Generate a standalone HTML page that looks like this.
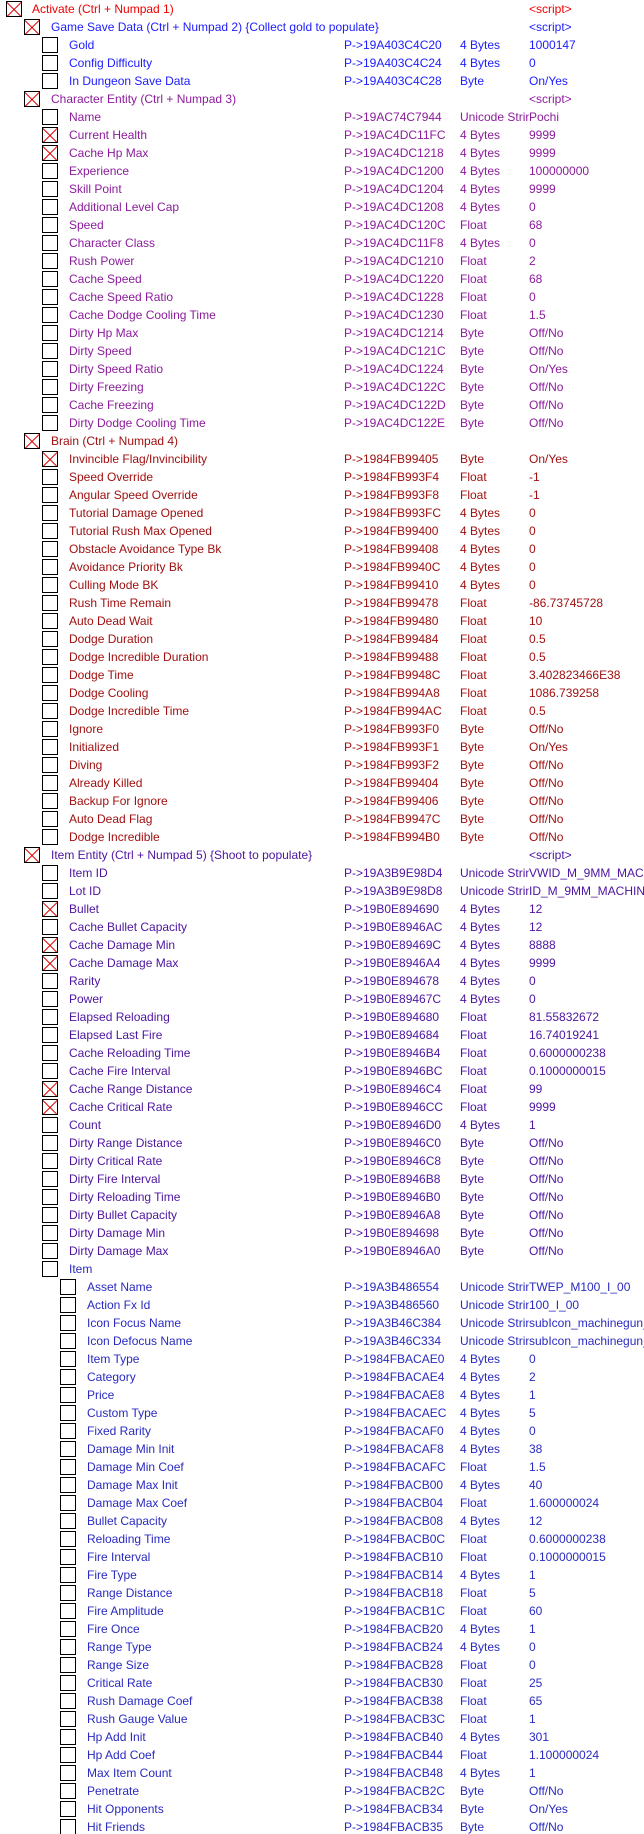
<!DOCTYPE html>
<html><head><meta charset="utf-8">
<style>
html,body{margin:0;padding:0;background:#fff;width:644px;height:1834px;overflow:hidden}
body{font-family:"Liberation Sans",Arial,sans-serif;font-size:12px}
.r{position:relative;height:18px;line-height:18px;white-space:nowrap}
.r i{position:absolute;top:1px;width:14px;height:14px;border:1px solid #000;background:#fff;overflow:hidden}
.r i.x::before,.r i.x::after{content:"";position:absolute;left:-3px;top:6.5px;width:20px;height:1px;background:#e00000;transform:rotate(45deg)}
.r i.x::after{transform:rotate(-45deg)}
.r b,.r s,.r u,.r em{position:absolute;top:0;font-weight:normal;font-style:normal;text-decoration:none}
.r s{left:344px}
.r u{left:460px;width:69px;overflow:hidden}
.r em{left:529px;width:115px;overflow:hidden}
.l0 i{left:6px}.l0 b{left:32px}
.l1 i{left:24px}.l1 b{left:51px}
.l2 i{left:42px}.l2 b{left:69px}
.l3 i{left:60px}.l3 b{left:87px}
.ca{color:#f00000}
.cg{color:#1c1cff}
.cc{color:#8c1c9c}
.cb{color:#a01010}
.ci{color:#4c14a0}
.cj{color:#2a2ac0}
</style></head><body>
<div class="r l0 ca"><i class="x"></i><b>Activate (Ctrl + Numpad 1)</b><em>&lt;script&gt;</em></div>
<div class="r l1 cg"><i class="x"></i><b>Game Save Data (Ctrl + Numpad 2) {Collect gold to populate}</b><em>&lt;script&gt;</em></div>
<div class="r l2 cg"><i></i><b>Gold</b><s>P-&gt;19A403C4C20</s><u>4 Bytes</u><em>1000147</em></div>
<div class="r l2 cg"><i></i><b>Config Difficulty</b><s>P-&gt;19A403C4C24</s><u>4 Bytes</u><em>0</em></div>
<div class="r l2 cg"><i></i><b>In Dungeon Save Data</b><s>P-&gt;19A403C4C28</s><u>Byte</u><em>On/Yes</em></div>
<div class="r l1 cc"><i class="x"></i><b>Character Entity (Ctrl + Numpad 3)</b><em>&lt;script&gt;</em></div>
<div class="r l2 cc"><i></i><b>Name</b><s>P-&gt;19AC74C7944</s><u>Unicode String</u><em>Pochi</em></div>
<div class="r l2 cc"><i class="x"></i><b>Current Health</b><s>P-&gt;19AC4DC11FC</s><u>4 Bytes</u><em>9999</em></div>
<div class="r l2 cc"><i class="x"></i><b>Cache Hp Max</b><s>P-&gt;19AC4DC1218</s><u>4 Bytes</u><em>9999</em></div>
<div class="r l2 cc"><i></i><b>Experience</b><s>P-&gt;19AC4DC1200</s><u>4 Bytes</u><em>100000000</em></div>
<div class="r l2 cc"><i></i><b>Skill Point</b><s>P-&gt;19AC4DC1204</s><u>4 Bytes</u><em>9999</em></div>
<div class="r l2 cc"><i></i><b>Additional Level Cap</b><s>P-&gt;19AC4DC1208</s><u>4 Bytes</u><em>0</em></div>
<div class="r l2 cc"><i></i><b>Speed</b><s>P-&gt;19AC4DC120C</s><u>Float</u><em>68</em></div>
<div class="r l2 cc"><i></i><b>Character Class</b><s>P-&gt;19AC4DC11F8</s><u>4 Bytes</u><em>0</em></div>
<div class="r l2 cc"><i></i><b>Rush Power</b><s>P-&gt;19AC4DC1210</s><u>Float</u><em>2</em></div>
<div class="r l2 cc"><i></i><b>Cache Speed</b><s>P-&gt;19AC4DC1220</s><u>Float</u><em>68</em></div>
<div class="r l2 cc"><i></i><b>Cache Speed Ratio</b><s>P-&gt;19AC4DC1228</s><u>Float</u><em>0</em></div>
<div class="r l2 cc"><i></i><b>Cache Dodge Cooling Time</b><s>P-&gt;19AC4DC1230</s><u>Float</u><em>1.5</em></div>
<div class="r l2 cc"><i></i><b>Dirty Hp Max</b><s>P-&gt;19AC4DC1214</s><u>Byte</u><em>Off/No</em></div>
<div class="r l2 cc"><i></i><b>Dirty Speed</b><s>P-&gt;19AC4DC121C</s><u>Byte</u><em>Off/No</em></div>
<div class="r l2 cc"><i></i><b>Dirty Speed Ratio</b><s>P-&gt;19AC4DC1224</s><u>Byte</u><em>On/Yes</em></div>
<div class="r l2 cc"><i></i><b>Dirty Freezing</b><s>P-&gt;19AC4DC122C</s><u>Byte</u><em>Off/No</em></div>
<div class="r l2 cc"><i></i><b>Cache Freezing</b><s>P-&gt;19AC4DC122D</s><u>Byte</u><em>Off/No</em></div>
<div class="r l2 cc"><i></i><b>Dirty Dodge Cooling Time</b><s>P-&gt;19AC4DC122E</s><u>Byte</u><em>Off/No</em></div>
<div class="r l1 cb"><i class="x"></i><b>Brain (Ctrl + Numpad 4)</b></div>
<div class="r l2 cb"><i class="x"></i><b>Invincible Flag/Invincibility</b><s>P-&gt;1984FB99405</s><u>Byte</u><em>On/Yes</em></div>
<div class="r l2 cb"><i></i><b>Speed Override</b><s>P-&gt;1984FB993F4</s><u>Float</u><em>-1</em></div>
<div class="r l2 cb"><i></i><b>Angular Speed Override</b><s>P-&gt;1984FB993F8</s><u>Float</u><em>-1</em></div>
<div class="r l2 cb"><i></i><b>Tutorial Damage Opened</b><s>P-&gt;1984FB993FC</s><u>4 Bytes</u><em>0</em></div>
<div class="r l2 cb"><i></i><b>Tutorial Rush Max Opened</b><s>P-&gt;1984FB99400</s><u>4 Bytes</u><em>0</em></div>
<div class="r l2 cb"><i></i><b>Obstacle Avoidance Type Bk</b><s>P-&gt;1984FB99408</s><u>4 Bytes</u><em>0</em></div>
<div class="r l2 cb"><i></i><b>Avoidance Priority Bk</b><s>P-&gt;1984FB9940C</s><u>4 Bytes</u><em>0</em></div>
<div class="r l2 cb"><i></i><b>Culling Mode BK</b><s>P-&gt;1984FB99410</s><u>4 Bytes</u><em>0</em></div>
<div class="r l2 cb"><i></i><b>Rush Time Remain</b><s>P-&gt;1984FB99478</s><u>Float</u><em>-86.73745728</em></div>
<div class="r l2 cb"><i></i><b>Auto Dead Wait</b><s>P-&gt;1984FB99480</s><u>Float</u><em>10</em></div>
<div class="r l2 cb"><i></i><b>Dodge Duration</b><s>P-&gt;1984FB99484</s><u>Float</u><em>0.5</em></div>
<div class="r l2 cb"><i></i><b>Dodge Incredible Duration</b><s>P-&gt;1984FB99488</s><u>Float</u><em>0.5</em></div>
<div class="r l2 cb"><i></i><b>Dodge Time</b><s>P-&gt;1984FB9948C</s><u>Float</u><em>3.402823466E38</em></div>
<div class="r l2 cb"><i></i><b>Dodge Cooling</b><s>P-&gt;1984FB994A8</s><u>Float</u><em>1086.739258</em></div>
<div class="r l2 cb"><i></i><b>Dodge Incredible Time</b><s>P-&gt;1984FB994AC</s><u>Float</u><em>0.5</em></div>
<div class="r l2 cb"><i></i><b>Ignore</b><s>P-&gt;1984FB993F0</s><u>Byte</u><em>Off/No</em></div>
<div class="r l2 cb"><i></i><b>Initialized</b><s>P-&gt;1984FB993F1</s><u>Byte</u><em>On/Yes</em></div>
<div class="r l2 cb"><i></i><b>Diving</b><s>P-&gt;1984FB993F2</s><u>Byte</u><em>Off/No</em></div>
<div class="r l2 cb"><i></i><b>Already Killed</b><s>P-&gt;1984FB99404</s><u>Byte</u><em>Off/No</em></div>
<div class="r l2 cb"><i></i><b>Backup For Ignore</b><s>P-&gt;1984FB99406</s><u>Byte</u><em>Off/No</em></div>
<div class="r l2 cb"><i></i><b>Auto Dead Flag</b><s>P-&gt;1984FB9947C</s><u>Byte</u><em>Off/No</em></div>
<div class="r l2 cb"><i></i><b>Dodge Incredible</b><s>P-&gt;1984FB994B0</s><u>Byte</u><em>Off/No</em></div>
<div class="r l1 ci"><i class="x"></i><b>Item Entity (Ctrl + Numpad 5) {Shoot to populate}</b><em>&lt;script&gt;</em></div>
<div class="r l2 ci"><i></i><b>Item ID</b><s>P-&gt;19A3B9E98D4</s><u>Unicode String</u><em>VWID_M_9MM_MACHINEGUN</em></div>
<div class="r l2 ci"><i></i><b>Lot ID</b><s>P-&gt;19A3B9E98D8</s><u>Unicode String</u><em>ID_M_9MM_MACHINEGUN</em></div>
<div class="r l2 ci"><i class="x"></i><b>Bullet</b><s>P-&gt;19B0E894690</s><u>4 Bytes</u><em>12</em></div>
<div class="r l2 ci"><i></i><b>Cache Bullet Capacity</b><s>P-&gt;19B0E8946AC</s><u>4 Bytes</u><em>12</em></div>
<div class="r l2 ci"><i class="x"></i><b>Cache Damage Min</b><s>P-&gt;19B0E89469C</s><u>4 Bytes</u><em>8888</em></div>
<div class="r l2 ci"><i class="x"></i><b>Cache Damage Max</b><s>P-&gt;19B0E8946A4</s><u>4 Bytes</u><em>9999</em></div>
<div class="r l2 ci"><i></i><b>Rarity</b><s>P-&gt;19B0E894678</s><u>4 Bytes</u><em>0</em></div>
<div class="r l2 ci"><i></i><b>Power</b><s>P-&gt;19B0E89467C</s><u>4 Bytes</u><em>0</em></div>
<div class="r l2 ci"><i></i><b>Elapsed Reloading</b><s>P-&gt;19B0E894680</s><u>Float</u><em>81.55832672</em></div>
<div class="r l2 ci"><i></i><b>Elapsed Last Fire</b><s>P-&gt;19B0E894684</s><u>Float</u><em>16.74019241</em></div>
<div class="r l2 ci"><i></i><b>Cache Reloading Time</b><s>P-&gt;19B0E8946B4</s><u>Float</u><em>0.6000000238</em></div>
<div class="r l2 ci"><i></i><b>Cache Fire Interval</b><s>P-&gt;19B0E8946BC</s><u>Float</u><em>0.1000000015</em></div>
<div class="r l2 ci"><i class="x"></i><b>Cache Range Distance</b><s>P-&gt;19B0E8946C4</s><u>Float</u><em>99</em></div>
<div class="r l2 ci"><i class="x"></i><b>Cache Critical Rate</b><s>P-&gt;19B0E8946CC</s><u>Float</u><em>9999</em></div>
<div class="r l2 ci"><i></i><b>Count</b><s>P-&gt;19B0E8946D0</s><u>4 Bytes</u><em>1</em></div>
<div class="r l2 ci"><i></i><b>Dirty Range Distance</b><s>P-&gt;19B0E8946C0</s><u>Byte</u><em>Off/No</em></div>
<div class="r l2 ci"><i></i><b>Dirty Critical Rate</b><s>P-&gt;19B0E8946C8</s><u>Byte</u><em>Off/No</em></div>
<div class="r l2 ci"><i></i><b>Dirty Fire Interval</b><s>P-&gt;19B0E8946B8</s><u>Byte</u><em>Off/No</em></div>
<div class="r l2 ci"><i></i><b>Dirty Reloading Time</b><s>P-&gt;19B0E8946B0</s><u>Byte</u><em>Off/No</em></div>
<div class="r l2 ci"><i></i><b>Dirty Bullet Capacity</b><s>P-&gt;19B0E8946A8</s><u>Byte</u><em>Off/No</em></div>
<div class="r l2 ci"><i></i><b>Dirty Damage Min</b><s>P-&gt;19B0E894698</s><u>Byte</u><em>Off/No</em></div>
<div class="r l2 ci"><i></i><b>Dirty Damage Max</b><s>P-&gt;19B0E8946A0</s><u>Byte</u><em>Off/No</em></div>
<div class="r l2 cj"><i></i><b>Item</b></div>
<div class="r l3 cj"><i></i><b>Asset Name</b><s>P-&gt;19A3B486554</s><u>Unicode String</u><em>TWEP_M100_I_00</em></div>
<div class="r l3 cj"><i></i><b>Action Fx Id</b><s>P-&gt;19A3B486560</s><u>Unicode String</u><em>100_I_00</em></div>
<div class="r l3 cj"><i></i><b>Icon Focus Name</b><s>P-&gt;19A3B46C384</s><u>Unicode String</u><em>subIcon_machinegun_</em></div>
<div class="r l3 cj"><i></i><b>Icon Defocus Name</b><s>P-&gt;19A3B46C334</s><u>Unicode String</u><em>subIcon_machinegun_</em></div>
<div class="r l3 cj"><i></i><b>Item Type</b><s>P-&gt;1984FBACAE0</s><u>4 Bytes</u><em>0</em></div>
<div class="r l3 cj"><i></i><b>Category</b><s>P-&gt;1984FBACAE4</s><u>4 Bytes</u><em>2</em></div>
<div class="r l3 cj"><i></i><b>Price</b><s>P-&gt;1984FBACAE8</s><u>4 Bytes</u><em>1</em></div>
<div class="r l3 cj"><i></i><b>Custom Type</b><s>P-&gt;1984FBACAEC</s><u>4 Bytes</u><em>5</em></div>
<div class="r l3 cj"><i></i><b>Fixed Rarity</b><s>P-&gt;1984FBACAF0</s><u>4 Bytes</u><em>0</em></div>
<div class="r l3 cj"><i></i><b>Damage Min Init</b><s>P-&gt;1984FBACAF8</s><u>4 Bytes</u><em>38</em></div>
<div class="r l3 cj"><i></i><b>Damage Min Coef</b><s>P-&gt;1984FBACAFC</s><u>Float</u><em>1.5</em></div>
<div class="r l3 cj"><i></i><b>Damage Max Init</b><s>P-&gt;1984FBACB00</s><u>4 Bytes</u><em>40</em></div>
<div class="r l3 cj"><i></i><b>Damage Max Coef</b><s>P-&gt;1984FBACB04</s><u>Float</u><em>1.600000024</em></div>
<div class="r l3 cj"><i></i><b>Bullet Capacity</b><s>P-&gt;1984FBACB08</s><u>4 Bytes</u><em>12</em></div>
<div class="r l3 cj"><i></i><b>Reloading Time</b><s>P-&gt;1984FBACB0C</s><u>Float</u><em>0.6000000238</em></div>
<div class="r l3 cj"><i></i><b>Fire Interval</b><s>P-&gt;1984FBACB10</s><u>Float</u><em>0.1000000015</em></div>
<div class="r l3 cj"><i></i><b>Fire Type</b><s>P-&gt;1984FBACB14</s><u>4 Bytes</u><em>1</em></div>
<div class="r l3 cj"><i></i><b>Range Distance</b><s>P-&gt;1984FBACB18</s><u>Float</u><em>5</em></div>
<div class="r l3 cj"><i></i><b>Fire Amplitude</b><s>P-&gt;1984FBACB1C</s><u>Float</u><em>60</em></div>
<div class="r l3 cj"><i></i><b>Fire Once</b><s>P-&gt;1984FBACB20</s><u>4 Bytes</u><em>1</em></div>
<div class="r l3 cj"><i></i><b>Range Type</b><s>P-&gt;1984FBACB24</s><u>4 Bytes</u><em>0</em></div>
<div class="r l3 cj"><i></i><b>Range Size</b><s>P-&gt;1984FBACB28</s><u>Float</u><em>0</em></div>
<div class="r l3 cj"><i></i><b>Critical Rate</b><s>P-&gt;1984FBACB30</s><u>Float</u><em>25</em></div>
<div class="r l3 cj"><i></i><b>Rush Damage Coef</b><s>P-&gt;1984FBACB38</s><u>Float</u><em>65</em></div>
<div class="r l3 cj"><i></i><b>Rush Gauge Value</b><s>P-&gt;1984FBACB3C</s><u>Float</u><em>1</em></div>
<div class="r l3 cj"><i></i><b>Hp Add Init</b><s>P-&gt;1984FBACB40</s><u>4 Bytes</u><em>301</em></div>
<div class="r l3 cj"><i></i><b>Hp Add Coef</b><s>P-&gt;1984FBACB44</s><u>Float</u><em>1.100000024</em></div>
<div class="r l3 cj"><i></i><b>Max Item Count</b><s>P-&gt;1984FBACB48</s><u>4 Bytes</u><em>1</em></div>
<div class="r l3 cj"><i></i><b>Penetrate</b><s>P-&gt;1984FBACB2C</s><u>Byte</u><em>Off/No</em></div>
<div class="r l3 cj"><i></i><b>Hit Opponents</b><s>P-&gt;1984FBACB34</s><u>Byte</u><em>On/Yes</em></div>
<div class="r l3 cj"><i></i><b>Hit Friends</b><s>P-&gt;1984FBACB35</s><u>Byte</u><em>Off/No</em></div>
</body></html>
